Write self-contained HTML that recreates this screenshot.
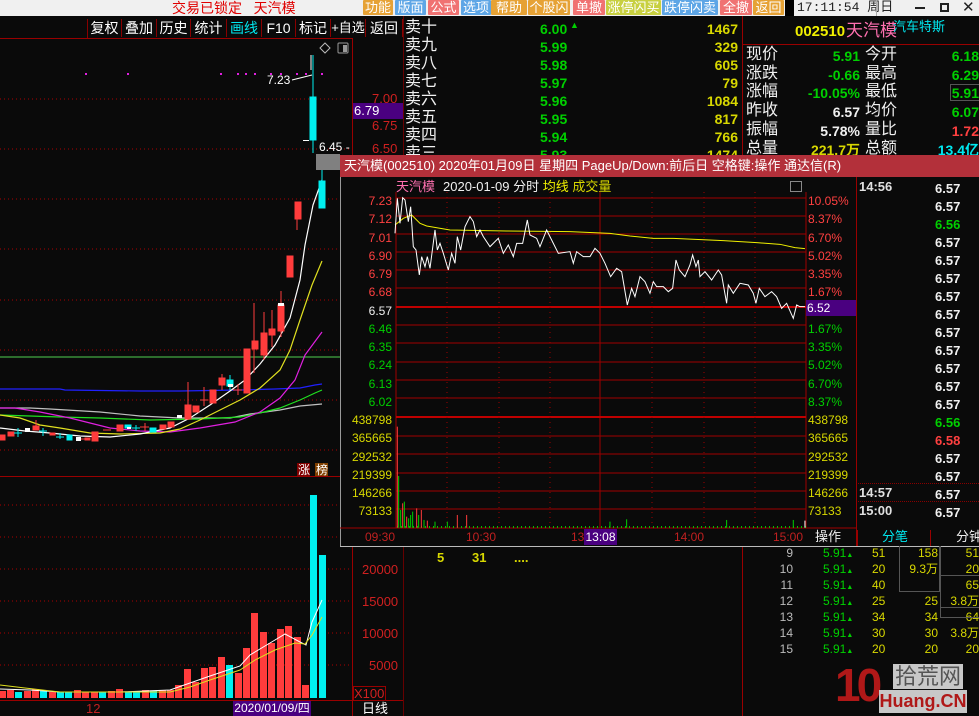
<!DOCTYPE html>
<html><head><meta charset="utf-8"><style>
*{margin:0;padding:0;box-sizing:border-box}
body{width:979px;height:716px;background:#0a0a0a;overflow:hidden;position:relative;font-family:"Liberation Sans","WenQuanYi Zen Hei","Noto Sans CJK SC",sans-serif;font-size:14px;color:#fff}
.a{position:absolute;white-space:nowrap;line-height:1}
.btn{position:absolute;top:0;height:15px;font-size:13px;line-height:15px;text-align:center;color:#fff;border-radius:1px;white-space:nowrap;overflow:hidden}
.tb{position:absolute;top:19px;font-size:14px;color:#fff;text-align:center;height:18px;line-height:18px;border-right:1px solid #800;white-space:nowrap;overflow:hidden}
.g{color:#00d000}.y{color:#d8d800}.r{color:#ff4040}.c{color:#00e8f0}.w{color:#f0f0f0}
.b{font-weight:bold}
.R{text-align:right}
.row{display:block;height:16px;line-height:16px}
</style></head><body>
<!-- top bar -->
<div class="a" style="left:0;top:0;width:979px;height:16px;background:#f0f0f0"></div>
<div class="a" style="left:172px;top:0;font-size:14px;color:#e00000;line-height:16px">交易已锁定 &nbsp;&nbsp;天汽模</div>
<div class="btn" style="left:363px;width:30px;background:#e6a235">功能</div>
<div class="btn" style="left:395px;width:31px;background:#5ea6e6">版面</div>
<div class="btn" style="left:428px;width:31px;background:#f07272">公式</div>
<div class="btn" style="left:461px;width:30px;background:#5ea6e6">选项</div>
<div class="btn" style="left:491px;width:36px;background:#e6a235">帮助</div>
<div class="btn" style="left:528px;width:42px;background:#e6a235">个股闪</div>
<div class="btn" style="left:573px;width:32px;background:#f07272">单撤</div>
<div class="btn" style="left:606px;width:55px;background:#c8d040">涨停闪买</div>
<div class="btn" style="left:662px;width:56px;background:#5ea6e6">跌停闪卖</div>
<div class="btn" style="left:720px;width:32px;background:#f07272">全撤</div>
<div class="btn" style="left:753px;width:31px;background:#e6a235">返回</div>
<div class="a" style="left:785px;top:0;width:9px;height:16px;background:#000"></div>
<div class="a" style="left:797px;top:1px;font-size:13px;color:#222;font-family:'Liberation Mono',monospace">17:11:54 周日</div>
<div class="a" style="left:876px;top:0;width:1px;height:16px;background:#aaa"></div>
<div class="a" style="left:915px;top:7px;width:10px;height:2px;background:#222"></div>
<div class="a" style="left:940px;top:3px;width:9px;height:9px;border:2px solid #222"></div>
<div class="a" style="left:962px;top:0px;font-size:15px;color:#222">✕</div>

<!-- toolbar -->
<div class="a" style="left:0;top:38px;width:352px;height:1px;background:#900"></div>
<div class="a" style="left:87px;top:19px;width:1px;height:19px;background:#800"></div>
<div class="tb" style="left:88px;width:34px">复权</div>
<div class="tb" style="left:122px;width:35px">叠加</div>
<div class="tb" style="left:157px;width:34px">历史</div>
<div class="tb" style="left:191px;width:36px">统计</div>
<div class="tb" style="left:227px;width:35px;color:#00e8f0">画线</div>
<div class="tb" style="left:262px;width:34px">F10</div>
<div class="tb" style="left:296px;width:35px">标记</div>
<div class="tb" style="left:331px;width:35px;font-size:13px">+自选</div>
<div class="tb" style="left:366px;width:37px">返回</div>

<!-- frame lines -->
<div class="a" style="left:352px;top:38px;width:1px;height:678px;background:#900"></div>
<div class="a" style="left:403px;top:16px;width:1px;height:700px;background:#600"></div>
<div class="a" style="left:742px;top:16px;width:1px;height:700px;background:#900"></div>
<div class="a" style="left:742px;top:44px;width:237px;height:1px;background:#900"></div>
<div class="a" style="left:0;top:476px;width:352px;height:1px;background:#900"></div>
<div class="a" style="left:0;top:700px;width:403px;height:1px;background:#900"></div>

<!-- left chart svg -->
<svg class="a" style="left:0;top:38px" width="352" height="662" viewBox="0 38 352 662">
<g stroke="#a00" stroke-dasharray="1,3" stroke-width="1">
<line x1="0" y1="99" x2="352" y2="99"/><line x1="0" y1="149" x2="352" y2="149"/><line x1="0" y1="199" x2="340" y2="199"/><line x1="0" y1="249" x2="340" y2="249"/><line x1="0" y1="300" x2="340" y2="300"/><line x1="0" y1="350" x2="340" y2="350"/><line x1="0" y1="400" x2="340" y2="400"/><line x1="0" y1="450" x2="340" y2="450"/>
<line x1="0" y1="505" x2="352" y2="505"/><line x1="0" y1="537" x2="352" y2="537"/><line x1="0" y1="569" x2="352" y2="569"/><line x1="0" y1="601" x2="352" y2="601"/><line x1="0" y1="633" x2="352" y2="633"/><line x1="0" y1="665" x2="352" y2="665"/>
</g>
<line x1="0" y1="357" x2="340" y2="357" stroke="#50d050"/>
<g fill="#e020e0"><rect x="85" y="73" width="2" height="2"/><rect x="127" y="73" width="2" height="2"/><rect x="220" y="73" width="2" height="2"/><rect x="237" y="73" width="2" height="2"/><rect x="245" y="73" width="2" height="2"/><rect x="254" y="73" width="2" height="2"/><rect x="270" y="73" width="2" height="2"/><rect x="280" y="73" width="2" height="2"/><rect x="296" y="73" width="2" height="2"/><rect x="305" y="73" width="2" height="2"/><rect x="321" y="73" width="2" height="2"/></g>
<text x="267" y="84" fill="#fff" font-size="12" font-family="Liberation Sans">7.23</text>
<line x1="292" y1="80" x2="312" y2="75" stroke="#fff"/>
<line x1="311" y1="55" x2="311" y2="70" stroke="#fff"/>
<text x="319" y="151" fill="#fff" font-size="12" font-family="Liberation Sans">6.45 -</text>
<rect x="303" y="140" width="6" height="1" fill="#fff"/>
<path d="M325 43 l5 5 -5 5 -5 -5z" fill="none" stroke="#bbb"/>
<rect x="338" y="43" width="10" height="10" fill="none" stroke="#999" rx="1"/><rect x="343" y="45" width="4" height="7" fill="#999"/>
<polyline fill="none" stroke="#c0c0c0" stroke-width="1.2" points="0,408 30,408 50,409 100,412 140,416 180,418 230,418 250,414 280,410 300,406 322,404"/>
<polyline fill="none" stroke="#20e020" stroke-width="1.2" points="0,415 60,417 100,418 150,420 200,419 240,417 260,413 280,408 300,400 315,393 322,390"/>
<polyline fill="none" stroke="#2020ff" stroke-width="1.2" points="0,389 60,389 65,390 140,391 180,391 240,390 275,389 300,388 315,385 322,384"/>
<polyline fill="none" stroke="#e020e0" stroke-width="1.2" points="0,408 15,408 40,412 70,418 110,428 140,431 170,432 200,428 235,422 260,412 280,398 295,380 305,355 322,332"/>
<polyline fill="none" stroke="#e0e020" stroke-width="1.2" points="0,415 20,418 40,425 60,428 90,433 120,434 160,433 180,429 200,420 220,410 240,400 260,388 280,370 290,350 300,320 312,285 322,261"/>
<polyline fill="none" stroke="#fff" stroke-width="1.2" points="0,428 25,431 50,433 80,436 110,437 140,434 170,428 190,418 210,405 230,391 245,380 260,364 275,345 290,318 300,280 305,245 313,205 322,180"/>
<g fill="#ff3c3c" stroke="#ff3c3c">
<rect x="0" y="435" width="5" height="5"/><rect x="8" y="432" width="6" height="4"/><rect x="33" y="426" width="6" height="4"/><rect x="50" y="433" width="5" height="2"/><rect x="85" y="438" width="5" height="2"/><rect x="92" y="432" width="6" height="9"/><rect x="117" y="425" width="6" height="6"/><rect x="160" y="425" width="6" height="4"/><rect x="168" y="422" width="6" height="5"/><rect x="185" y="405" width="6" height="14"/><rect x="193" y="406" width="6" height="6"/><rect x="210" y="390" width="6" height="13"/><rect x="219" y="378" width="6" height="7"/><rect x="244" y="349" width="6" height="44"/><rect x="252" y="341" width="6" height="8"/><rect x="261" y="333" width="6" height="22"/><rect x="269" y="329" width="6" height="6"/><rect x="278" y="305" width="6" height="26"/><rect x="287" y="256" width="6" height="21"/><rect x="295" y="202" width="6" height="17"/>
<line x1="188" y1="382" x2="188" y2="420"/><line x1="204" y1="387" x2="204" y2="406"/><line x1="200" y1="400" x2="208" y2="400"/><line x1="222" y1="374" x2="222" y2="390"/><line x1="254" y1="303" x2="254" y2="373"/><line x1="264" y1="312" x2="264" y2="360"/><line x1="272" y1="310" x2="272" y2="347"/><line x1="281" y1="291" x2="281" y2="337"/><line x1="297" y1="219" x2="297" y2="230"/><line x1="36" y1="420" x2="36" y2="426"/><line x1="145" y1="423" x2="145" y2="431"/><line x1="140" y1="427" x2="149" y2="427"/><line x1="238" y1="384" x2="238" y2="395"/><line x1="233" y1="390" x2="242" y2="390"/><line x1="103" y1="430" x2="111" y2="430"/><line x1="81" y1="439" x2="90" y2="439"/>
</g>
<g fill="#00f0f0" stroke="#00f0f0">
<rect x="67" y="435" width="5" height="5"/><rect x="125" y="425" width="6" height="3"/><rect x="150" y="428" width="6" height="4"/><rect x="227" y="380" width="6" height="6"/><rect x="310" y="97" width="6" height="43"/><rect x="319" y="181" width="6" height="27"/>
<line x1="18" y1="428" x2="18" y2="437"/><line x1="14" y1="433" x2="22" y2="433"/><line x1="43" y1="428" x2="43" y2="436"/><line x1="39" y1="431" x2="47" y2="431"/><line x1="60" y1="433" x2="60" y2="439"/><line x1="56" y1="437" x2="64" y2="437"/><line x1="136" y1="425" x2="136" y2="431"/><line x1="132" y1="428" x2="140" y2="428"/><line x1="313" y1="55" x2="313" y2="153"/><line x1="322" y1="170" x2="322" y2="181"/><line x1="230" y1="375" x2="230" y2="390"/>
</g>
<g fill="#fff"><rect x="25" y="428" width="5" height="4"/><rect x="76" y="437" width="5" height="4"/><rect x="177" y="415" width="5" height="3"/><rect x="228" y="384" width="5" height="3"/><rect x="278" y="303" width="6" height="3"/><rect x="127" y="427" width="4" height="2"/></g>
<rect x="316" y="154" width="24" height="16" fill="#808080"/>
<rect x="297" y="463" width="13" height="13" fill="#800000"/><text x="298" y="474" fill="#fff" font-size="12" font-family="WenQuanYi Zen Hei">涨</text>
<rect x="315" y="463" width="13" height="13" fill="#804000"/><text x="316" y="474" fill="#fff" font-size="12" font-family="WenQuanYi Zen Hei">榜</text>
<g fill="#ff3c3c">
<rect x="0" y="691" width="6" height="7"/><rect x="7" y="690" width="7" height="8"/><rect x="24" y="691" width="7" height="7"/><rect x="32" y="689" width="7" height="9"/><rect x="49" y="692" width="7" height="6"/><rect x="74" y="690" width="7" height="8"/><rect x="91" y="692" width="7" height="6"/><rect x="108" y="691" width="7" height="7"/><rect x="116" y="689" width="7" height="9"/><rect x="142" y="690" width="7" height="8"/><rect x="159" y="690" width="7" height="8"/><rect x="167" y="690" width="7" height="8"/><rect x="175" y="685" width="7" height="13"/>
<rect x="184" y="669" width="7" height="29"/><rect x="192" y="682" width="7" height="16"/><rect x="201" y="668" width="7" height="30"/><rect x="209" y="667" width="7" height="31"/><rect x="218" y="657" width="7" height="41"/><rect x="235" y="673" width="7" height="25"/><rect x="243" y="648" width="7" height="50"/><rect x="251" y="613" width="7" height="85"/><rect x="260" y="632" width="7" height="66"/><rect x="268" y="643" width="7" height="55"/><rect x="277" y="629" width="7" height="69"/><rect x="285" y="626" width="7" height="72"/><rect x="294" y="637" width="7" height="61"/><rect x="302" y="685" width="7" height="13"/>
<rect x="82" y="692" width="7" height="6"/></g>
<g fill="#00f0f0"><rect x="15" y="692" width="7" height="6"/><rect x="40" y="691" width="7" height="7"/><rect x="57" y="692" width="7" height="6"/><rect x="65" y="692" width="7" height="6"/><rect x="99" y="692" width="7" height="6"/><rect x="125" y="692" width="7" height="6"/><rect x="133" y="692" width="7" height="6"/><rect x="150" y="691" width="7" height="7"/><rect x="226" y="665" width="7" height="33"/><rect x="310" y="495" width="7" height="203"/><rect x="319" y="555" width="7" height="143"/></g>
<polyline fill="none" stroke="#fff" points="0,689 30,690 60,692 120,692 170,690 190,683 210,676 240,666 250,655 270,643 285,634 300,642 306,645 312,622 322,600"/>
<polyline fill="none" stroke="#e0e020" points="0,685 25,688 60,692 120,692 170,692 190,687 210,680 240,670 255,660 275,650 295,643 305,644 312,635 322,617"/>
</svg>

<div class="a" style="left:372px;top:92px;color:#d02020;font-size:13px">7.00</div>
<div class="a" style="left:353px;top:103px;width:50px;height:16px;background:#4a0080;color:#fff;font-size:13px;line-height:16px;padding-left:1px">6.79</div>
<div class="a" style="left:372px;top:119px;color:#d02020;font-size:13px">6.75</div>
<div class="a" style="left:372px;top:142px;color:#d02020;font-size:13px">6.50</div>
<div class="a" style="left:362px;top:563px;color:#d02020;font-size:13px">20000</div>
<div class="a" style="left:362px;top:595px;color:#d02020;font-size:13px">15000</div>
<div class="a" style="left:362px;top:627px;color:#d02020;font-size:13px">10000</div>
<div class="a" style="left:369px;top:659px;color:#d02020;font-size:13px">5000</div>
<div class="a" style="left:353px;top:686px;width:33px;height:15px;border:1px solid #900;color:#d02020;font-size:13px;line-height:13px">X100</div>
<div class="a" style="left:362px;top:702px;color:#fff;font-size:13px">日线</div>
<div class="a" style="left:86px;top:702px;color:#c02020;font-size:13px">12</div>
<div class="a" style="left:233px;top:701px;width:78px;height:15px;background:#4a0080;color:#fff;font-size:12px;line-height:15px;text-align:center">2020/01/09/四</div>

<!-- order book -->
<div class="a" style="left:405px;top:19px;font-size:16px;line-height:18px;color:#f0f0f0">卖十<br>卖九<br>卖八<br>卖七<br>卖六<br>卖五<br>卖四<br>卖三</div>
<div class="a g b" style="left:540px;top:20px;font-size:14px;line-height:18px">6.00<br>5.99<br>5.98<br>5.97<br>5.96<br>5.95<br>5.94<br>5.93</div>
<div class="a g" style="left:570px;top:21px;font-size:9px">▲</div>
<div class="a y b R" style="left:680px;top:20px;width:58px;font-size:14px;line-height:18px">1467<br>329<br>605<br>79<br>1084<br>817<br>766<br>1474</div>

<!-- right quote panel -->
<div class="a b" style="left:795px;top:24px;font-size:15px;color:#f0f000">002510</div>
<div class="a" style="left:846px;top:22px;font-size:17px;color:#ff70b0">天汽模</div>
<div class="a" style="left:893px;top:20px;font-size:13px;color:#00e8f0">汽车特斯</div>
<div class="a" style="left:746px;top:46px;font-size:16px;line-height:18.7px;color:#f0f0f0">现价<br>涨跌<br>涨幅<br>昨收<br>振幅<br>总量</div>
<div class="a" style="left:865px;top:46px;font-size:16px;line-height:18.7px;color:#f0f0f0">今开<br>最高<br>最低<br>均价<br>量比<br>总额</div>
<div class="a b R" style="left:770px;top:47px;width:90px;font-size:14px;line-height:18.7px"><span class="g">5.91</span><br><span class="g">-0.66</span><br><span class="g">-10.05%</span><br><span class="w">6.57</span><br><span class="w">5.78%</span><br><span class="y">221.7万</span></div>
<div class="a b R" style="left:900px;top:47px;width:79px;font-size:14px;line-height:18.7px"><span class="g">6.18</span><br><span class="g">6.29</span><br><span class="g">5.91</span><br><span class="g">6.07</span><br><span class="r">1.72</span><br><span class="c">13.4亿</span></div>
<div class="a" style="left:950px;top:84px;width:30px;height:17px;border:1px solid #555"></div>

<!-- popup -->
<div class="a" style="left:340px;top:155px;width:639px;height:22px;background:#b3303a;color:#fff;font-size:13px;line-height:22px;padding-left:4px">天汽模(002510) 2020年01月09日 星期四 PageUp/Down:前后日 空格键:操作 通达信(R)</div>
<div class="a" style="left:340px;top:177px;width:639px;height:370px;background:#0a0a0a"></div>
<div class="a" style="left:340px;top:177px;width:1px;height:370px;background:#999"></div>
<div class="a" style="left:340px;top:546px;width:639px;height:1px;background:#bbb"></div>
<div class="a" style="left:856px;top:177px;width:1px;height:369px;background:#900"></div>
<div class="a" style="left:396px;top:180px;font-size:13px;color:#ff70b0">天汽模</div>
<div class="a" style="left:443px;top:180px;font-size:13px;color:#f0f0f0">2020-01-09 分时 <span style="color:#f0f000">均线</span> <span style="color:#d8d800">成交量</span></div>
<div class="a" style="left:790px;top:181px;width:12px;height:11px;border:1px solid #888"></div>
<svg class="a" style="left:340px;top:177px" width="520" height="370" viewBox="340 177 520 370">
<g stroke="#a00000" stroke-width="1">
<line x1="396" y1="198" x2="806" y2="198"/><line x1="396" y1="216" x2="806" y2="216"/><line x1="396" y1="234" x2="806" y2="234"/><line x1="396" y1="252" x2="806" y2="252"/><line x1="396" y1="270" x2="806" y2="270"/><line x1="396" y1="288" x2="806" y2="288"/><line x1="396" y1="325" x2="806" y2="325"/><line x1="396" y1="343" x2="806" y2="343"/><line x1="396" y1="362" x2="806" y2="362"/><line x1="396" y1="380" x2="806" y2="380"/><line x1="396" y1="398" x2="806" y2="398"/><line x1="396" y1="436" x2="806" y2="436"/><line x1="396" y1="454" x2="806" y2="454"/><line x1="396" y1="473" x2="806" y2="473"/><line x1="396" y1="491" x2="806" y2="491"/><line x1="396" y1="509" x2="806" y2="509"/>
<line x1="396" y1="192" x2="396" y2="528"/><line x1="806" y1="192" x2="806" y2="528"/><line x1="600" y1="192" x2="600" y2="528"/><line x1="340" y1="528" x2="856" y2="528"/>
</g>
<line x1="396" y1="307" x2="806" y2="307" stroke="#c00000" stroke-width="2"/><line x1="396" y1="417" x2="806" y2="417" stroke="#c00000" stroke-width="2"/>
<g stroke="#a00000" stroke-dasharray="1,4"><line x1="447" y1="192" x2="447" y2="528"/><line x1="499" y1="192" x2="499" y2="528"/><line x1="550" y1="192" x2="550" y2="528"/><line x1="652" y1="192" x2="652" y2="528"/><line x1="704" y1="192" x2="704" y2="528"/><line x1="755" y1="192" x2="755" y2="528"/></g>
<path d="M397 527 L806 527" stroke="#00c000" stroke-width="2" stroke-dasharray="1,3"/>
<g transform="translate(340,150) scale(0.3333)">
<polyline fill="none" stroke="#f0f000" stroke-width="3" points="165,225 190,205 215,195 240,220 260,228 330,240 500,243 690,245 810,250 870,258 940,265 1000,265 1150,272 1250,278 1320,283 1365,293 1395,296"/>
<polyline fill="none" stroke="#fff" stroke-width="3" points="165,250 172,145 180,220 188,143 195,150 205,215 212,170 220,290 228,300 238,375 245,320 255,350 262,320 270,355 285,240 292,300 300,280 310,310 325,360 335,310 345,340 352,260 362,300 375,230 390,200 400,215 410,260 420,240 430,260 450,290 475,265 490,310 505,285 520,320 530,280 548,280 562,210 570,255 590,265 600,290 620,240 635,270 655,310 690,305 700,340 710,305 730,320 750,320 765,295 780,310 795,340 812,380 830,355 845,365 862,465 875,415 885,440 900,380 915,395 930,430 940,395 950,410 970,410 985,425 998,415 1008,330 1018,360 1035,380 1050,345 1058,315 1068,350 1075,330 1080,380 1095,365 1115,390 1135,360 1145,375 1160,460 1165,405 1180,430 1200,400 1225,405 1240,430 1248,460 1258,415 1275,440 1295,425 1310,440 1325,475 1340,460 1360,505 1370,465 1380,470 1395,470"/>
<g stroke-width="3"><line x1="172" y1="1133" x2="172" y2="830" stroke="#ff3c3c"/><line x1="176" y1="1133" x2="176" y2="978" stroke="#00d000"/><line x1="182" y1="1133" x2="182" y2="1080" stroke="#00d000"/><line x1="188" y1="1133" x2="188" y2="1060" stroke="#ff3c3c"/><line x1="193" y1="1133" x2="193" y2="1055" stroke="#00d000"/><line x1="200" y1="1133" x2="200" y2="1100" stroke="#ff3c3c"/><line x1="206" y1="1133" x2="206" y2="1105" stroke="#00d000"/><line x1="212" y1="1133" x2="212" y2="1095" stroke="#00d000"/><line x1="218" y1="1133" x2="218" y2="1085" stroke="#00d000"/><line x1="230" y1="1133" x2="230" y2="1075" stroke="#ff3c3c"/><line x1="236" y1="1133" x2="236" y2="1095" stroke="#00d000"/><line x1="244" y1="1133" x2="244" y2="1080" stroke="#ff3c3c"/><line x1="252" y1="1133" x2="252" y2="1110" stroke="#00d000"/><line x1="262" y1="1133" x2="262" y2="1112" stroke="#ff3c3c"/><line x1="285" y1="1133" x2="285" y2="1115" stroke="#00d000"/><line x1="322" y1="1133" x2="322" y2="1115" stroke="#00d000"/><line x1="352" y1="1133" x2="352" y2="1095" stroke="#ff3c3c"/><line x1="380" y1="1133" x2="380" y2="1095" stroke="#ff3c3c"/><line x1="810" y1="1133" x2="810" y2="1115" stroke="#00d000"/><line x1="860" y1="1133" x2="860" y2="1108" stroke="#00d000"/><line x1="1160" y1="1133" x2="1160" y2="1110" stroke="#00d000"/><line x1="1360" y1="1133" x2="1360" y2="1110" stroke="#00d000"/><line x1="1395" y1="1133" x2="1395" y2="1112" stroke="#fff"/></g>
</g>
</svg>
<div class="a" style="left:343px;top:192px;width:49px;font-size:12px;line-height:18.25px;text-align:right"><span style="color:#ff4040">7.23<br>7.12<br>7.01<br>6.90<br>6.79<br>6.68</span><br><span class="w">6.57</span><br><span style="color:#00d000">6.46<br>6.35<br>6.24<br>6.13<br>6.02</span><br><span style="color:#d8d800">438798<br>365665<br>292532<br>219399<br>146266<br>73133</span></div>
<div class="a" style="left:808px;top:192px;font-size:12px;line-height:18.25px"><span style="color:#ff4040">10.05%<br>8.37%<br>6.70%<br>5.02%<br>3.35%<br>1.67%</span><br>&nbsp;<br><span style="color:#00d000">1.67%<br>3.35%<br>5.02%<br>6.70%<br>8.37%</span><br><span style="color:#d8d800">438798<br>365665<br>292532<br>219399<br>146266<br>73133</span></div>
<div class="a" style="left:806px;top:300px;width:50px;height:16px;background:#4a0080;color:#fff;font-size:12px;line-height:16px;padding-left:1px">6.52</div>
<div class="a" style="left:365px;top:531px;font-size:12px;color:#c02020">09:30</div>
<div class="a" style="left:466px;top:531px;font-size:12px;color:#c02020">10:30</div>
<div class="a" style="left:571px;top:531px;font-size:12px;color:#c02020">13</div>
<div class="a" style="left:584px;top:529px;width:33px;height:16px;background:#4a0080;color:#fff;font-size:12px;line-height:16px;text-align:center">13:08</div>
<div class="a" style="left:674px;top:531px;font-size:12px;color:#c02020">14:00</div>
<div class="a" style="left:773px;top:531px;font-size:12px;color:#c02020">15:00</div>
<div class="a" style="left:815px;top:530px;font-size:13px;color:#f0f0f0">操作</div>
<div class="a b" style="left:859px;top:180px;font-size:13px;color:#e0e0e0">14:56</div>
<div class="a b" style="left:859px;top:486px;font-size:13px;color:#e0e0e0">14:57</div>
<div class="a b" style="left:859px;top:504px;font-size:13px;color:#e0e0e0">15:00</div>
<div class="a b" style="left:935px;top:180px;font-size:13px;line-height:18px;color:#f0f0f0">6.57<br>6.57<br><span class="g">6.56</span><br>6.57<br>6.57<br>6.57<br>6.57<br>6.57<br>6.57<br>6.57<br>6.57<br>6.57<br>6.57<br><span class="g">6.56</span><br><span class="r">6.58</span><br>6.57<br>6.57<br>6.57<br>6.57</div>
<div class="a" style="left:858px;top:483px;width:121px;height:1px;border-top:1px dotted #800"></div>
<div class="a" style="left:858px;top:501px;width:121px;height:1px;border-top:1px dotted #800"></div>

<!-- below popup -->
<div class="a b" style="left:437px;top:551px;font-size:13px;color:#d8d800">5</div>
<div class="a b" style="left:472px;top:551px;font-size:13px;color:#d8d800">31</div>
<div class="a b" style="left:514px;top:551px;font-size:13px;color:#d8d800">....</div>
<div class="a" style="left:857px;top:530px;width:1px;height:16px;background:#900"></div>
<div class="a" style="left:930px;top:530px;width:1px;height:16px;background:#900"></div>
<div class="a" style="left:882px;top:530px;font-size:13px;color:#00e8f0">分笔</div>
<div class="a" style="left:956px;top:530px;font-size:13px;color:#f0f0f0">分钟</div>
<div class="a R" style="left:760px;top:545px;width:33px;font-size:12px;color:#bbb"><span class="row">9</span><span class="row">10</span><span class="row">11</span><span class="row">12</span><span class="row">13</span><span class="row">14</span><span class="row">15</span></div>
<div class="a" style="left:823px;top:545px;font-size:12px;color:#00d000"><span class="row">5.91<small style="font-size:7px">▲</small></span><span class="row">5.91<small style="font-size:7px">▲</small></span><span class="row">5.91<small style="font-size:7px">▲</small></span><span class="row">5.91<small style="font-size:7px">▲</small></span><span class="row">5.91<small style="font-size:7px">▲</small></span><span class="row">5.91<small style="font-size:7px">▲</small></span><span class="row">5.91<small style="font-size:7px">▲</small></span></div>
<div class="a" style="left:872px;top:545px;font-size:12px;color:#d8d800"><span class="row">51</span><span class="row">20</span><span class="row">40</span><span class="row">25</span><span class="row">34</span><span class="row">30</span><span class="row">20</span></div>
<div class="a R" style="left:900px;top:545px;width:38px;font-size:12px;color:#d8d800"><span class="row">158</span><span class="row">9.3万</span><span class="row"></span><span class="row">25</span><span class="row">34</span><span class="row">30</span><span class="row">20</span></div>
<div class="a R" style="left:945px;top:545px;width:34px;font-size:12px;color:#d8d800"><span class="row">51</span><span class="row">20</span><span class="row">65</span><span class="row">3.8万</span><span class="row">64</span><span class="row">3.8万</span><span class="row">20</span></div>
<div class="a" style="left:899px;top:546px;width:41px;height:46px;border:1px solid #555;border-top:none"></div>
<div class="a" style="left:940px;top:546px;width:40px;height:72px;border-left:1px solid #555;border-bottom:1px solid #555"></div>
<div class="a" style="left:940px;top:575px;width:40px;height:1px;background:#555"></div>
<div class="a" style="left:940px;top:607px;width:40px;height:1px;background:#555"></div>

<!-- watermark -->
<div class="a b" style="left:835px;top:662px;font-size:46px;color:#b01818;letter-spacing:-4px;line-height:46px">10</div>
<div class="a" style="left:893px;top:664px;width:70px;height:25px;background:#c8c8c8;color:#555;font-size:22px;line-height:25px;text-align:center">拾荒网</div>
<div class="a b" style="left:879px;top:690px;width:88px;height:23px;background:#c8c8c8;color:#b01818;font-size:18px;line-height:23px;text-align:center">Huang.CN</div>
</body></html>
